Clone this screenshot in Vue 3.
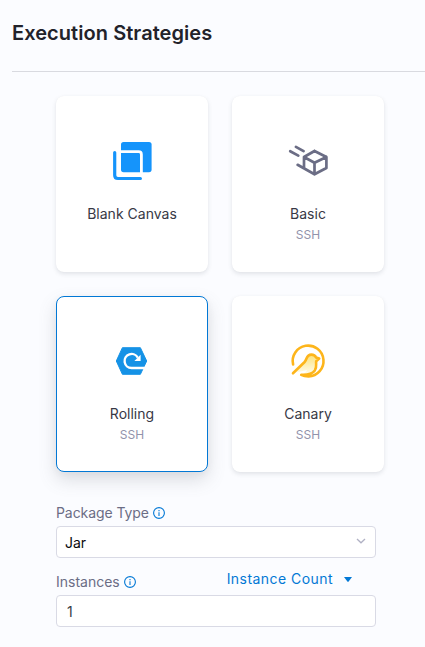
<script setup>
import { ref } from 'vue'

const strategies = [
  { id: 'blank', name: 'Blank Canvas' },
  { id: 'basic', name: 'Basic', type: 'SSH' },
  { id: 'rolling', name: 'Rolling', type: 'SSH' },
  { id: 'canary', name: 'Canary', type: 'SSH' },
]
const selected = ref('rolling')
const instances = ref('1')
</script>

<template>
  <main class="page">
    <h1 class="heading">Execution Strategies</h1>
    <section class="content">
      <div class="cards">
        <div
          v-for="s in strategies"
          :key="s.id"
          class="card"
          :class="{ selected: selected === s.id }"
          @click="selected = s.id"
        >
          <svg v-if="s.id === 'blank'" class="art" viewBox="0 0 64 60" fill="none">
            <rect x="21" y="12" width="30.6" height="30.2" rx="2.6" fill="#1594fb" />
            <path d="M20 21.7H38.6Q41.4 21.7 41.4 24.5V43" stroke="#fff" stroke-width="2.8" />
            <path d="M14.7 22.6V45.2Q14.7 48.5 18 48.5H40.4" stroke="#1594fb" stroke-width="3.2" stroke-linecap="round" />
          </svg>
          <svg v-else-if="s.id === 'basic'" class="art" viewBox="0 0 64 60" fill="none" stroke="#6b6d85" stroke-width="2.7" stroke-linecap="round" stroke-linejoin="round">
            <path d="M38.5 21L50.4 27V38L38.5 44.3L21.6 34.8M28 37.4V27L38.5 21M28 27L38.5 32.7L50.4 27M38.5 32.7V44" />
            <path d="M19.9 16.8L27.6 21.2M14.2 21.2L22.3 25.6" />
          </svg>
          <svg v-else-if="s.id === 'rolling'" class="art" viewBox="0 0 64 60" fill="none">
            <path d="M22.4 17.7H40.4L46.7 31L40.4 44.3H22.4L16.3 31Z" fill="#1592e6" stroke="#1592e6" stroke-width="1" stroke-linejoin="round" />
            <path d="M48 38H31.6A7 7 0 1 1 37.8 27.8" stroke="#fff" stroke-width="2.4" />
            <path d="M40.6 24.8V31H34.4Z" fill="#fff" />
          </svg>
          <svg v-else class="art" viewBox="0 0 64 60" fill="none">
            <defs>
              <linearGradient id="bird" x1="0" y1="0" x2="0" y2="1">
                <stop offset="0" stop-color="#fbe27a" />
                <stop offset="1" stop-color="#fffdf1" />
              </linearGradient>
            </defs>
            <path d="M17 43.3L28.6 32C31.4 29 30 24.6 35.4 24.6C38.2 24.6 39.5 26.2 40.1 27.5L43.2 28.6L40.2 31.2C39.7 34.2 41.2 37 38.8 40.5C36 44.1 31 44.8 25.4 44.6Q30 43.3 31 40Z" fill="url(#bird)" />
            <path d="M17.1 34.5A15.4 15.4 0 1 1 32.6 46.4C29 46.4 27 45.8 25.2 44.8C31 45.1 36.2 44.1 38.8 40.5C41.2 37 39.7 34.2 40.2 31.2L43.2 28.6L40.1 27.5C39.5 26.2 38.2 24.6 35.4 24.6C30 24.6 31.4 29 28.6 32L17 43.3" stroke="#fdb51b" stroke-width="2.6" stroke-linecap="round" stroke-linejoin="round" />
          </svg>
          <div class="name">{{ s.name }}</div>
          <div v-if="s.type" class="type">{{ s.type }}</div>
        </div>
      </div>

      <div class="label package">
        <span class="package-text">Package Type</span>
        <svg class="info" viewBox="0 0 12 12"><circle cx="6" cy="6" r="5.4" /><path d="M6 5.2V9M6 3V4.2" /></svg>
      </div>
      <div class="field">
        <span>Jar</span>
        <svg class="chevron" viewBox="0 0 10 8"><path d="M1 2L5 5.8L9 2" /></svg>
      </div>
      <div class="row">
        <div class="label">
          <span class="instances-text">Instances</span>
          <svg class="info" viewBox="0 0 12 12"><circle cx="6" cy="6" r="5.4" /><path d="M6 5.2V9M6 3V4.2" /></svg>
        </div>
        <div class="mode">
          <span>Instance Count</span>
          <svg class="caret" viewBox="0 0 8 5"><path d="M0 0H8L4.6 4.6Q4 5.2 3.4 4.6Z" /></svg>
        </div>
      </div>
      <input v-model="instances" class="field number" type="text" />
    </section>
  </main>
</template>

<style>
body {
  background: #fbfcff;
}
</style>

<style scoped>
.page {
  box-sizing: border-box;
  height: 647px;
  padding-left: 12px;
  overflow: hidden;
  background: #fbfcff;
  font-family: Inter, "Liberation Sans", sans-serif;
}
.heading {
  box-sizing: border-box;
  height: 72px;
  margin: 0;
  padding-top: 21px;
  border-bottom: 1px solid #d9dae0;
  color: #22222a;
  font-size: 20px;
  font-weight: 600;
  line-height: 24px;
  letter-spacing: 0.06px;
}
.content {
  width: 320px;
  margin: 24px 0 0 44px;
}
.cards {
  display: grid;
  grid-template-columns: 152px 152px;
  grid-auto-rows: 176px;
  gap: 24px;
}
.card {
  box-sizing: border-box;
  display: flex;
  flex-direction: column;
  align-items: center;
  padding-top: 33px;
  border: 1px solid transparent;
  border-radius: 8px;
  background: #fff;
  background-clip: border-box;
  box-shadow: 0 0 1px rgba(40, 41, 61, 0.05), 0 2px 4px rgba(96, 97, 112, 0.16);
  cursor: pointer;
}
.card.selected {
  border-color: #0278d5;
  box-shadow: 0 2px 8px rgba(40, 41, 61, 0.04), 0 8px 18px rgba(96, 100, 112, 0.2);
}
.art {
  width: 64px;
  height: 60px;
}
.name {
  margin-top: 14px;
  color: #383946;
  font-size: 14px;
  line-height: 20px;
  letter-spacing: 0.02px;
}
.type {
  margin-top: 1px;
  color: #9293ab;
  font-size: 12px;
  line-height: 20px;
}
.label {
  display: flex;
  align-items: center;
  gap: 4px;
  height: 20px;
  color: #6b6d85;
  font-size: 14px;
}
.label span {
  margin-top: -2px;
}
.package-text {
  letter-spacing: -0.07px;
}
.package {
  margin-top: 31px;
  margin-bottom: 3px;
}
.info {
  width: 12px;
  height: 12px;
  fill: none;
  stroke: #0278d5;
  stroke-width: 1.1;
}
.field {
  box-sizing: border-box;
  display: flex;
  align-items: center;
  justify-content: space-between;
  width: 320px;
  height: 32px;
  padding: 1px 9px 0 8px;
  border: 1px solid #d9dae5;
  border-radius: 4px;
  background: #fff;
  color: #0b0b0d;
  font-family: inherit;
  font-size: 14px;
}
.chevron {
  width: 10px;
  height: 8px;
  margin-top: -4px;
  fill: none;
  stroke: #b0b1c4;
  stroke-width: 1.3;
}
.row {
  display: flex;
  justify-content: space-between;
  height: 37px;
  padding: 14px 24px 0 0;
  box-sizing: border-box;
}
.mode {
  display: flex;
  align-items: center;
  gap: 11px;
  height: 14px;
  color: #0278d5;
  font-size: 14px;
  font-weight: 400;
  letter-spacing: 0.45px;
}
.mode span {
  margin-top: -2px;
}
.caret {
  width: 8px;
  height: 5px;
  fill: #0278d5;
}
.number {
  padding-left: 10px;
  color: #383946;
  outline: none;
}
</style>
